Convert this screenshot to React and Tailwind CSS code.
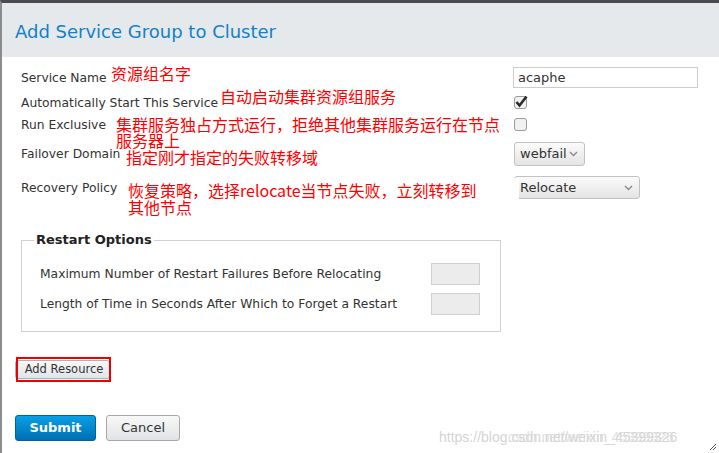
import React from 'react';

const ui = { fontFamily: '"DejaVu Sans", "Open Sans", sans-serif' };
const cjk = { fontFamily: '"Noto Sans CJK SC", "Liberation Sans", sans-serif' };

const Note = ({ children, className = '' }) => (
    <div className={`text-[16px] leading-[16px] text-[#ff0000] whitespace-nowrap ${className}`} style={cjk}>
        {children}
    </div>
);

const Chevron = () => (
    <svg width="9" height="6" viewBox="0 0 9 6" className="shrink-0">
        <path d="M1 1 L4.5 4.5 L8 1" fill="none" stroke="#8a8a8a" strokeWidth="1.4" />
    </svg>
);

const Select = ({ value, className = '' }) => (
    <div className={`flex items-center justify-between rounded-[3px] border border-[#c2c2c2] bg-gradient-to-b from-[#fbfbfb] to-[#e4e4e4] pl-[5px] pr-[6px] text-[13px] text-[#333] ${className}`}>
        <span>{value}</span>
        <Chevron />
    </div>
);

const Box = ({ checked }) => (
    <svg width="14" height="14" viewBox="0 0 14 14">
        <rect x="0.5" y="1.5" width="12" height="12" rx="2.5" fill="#f1f1f1" stroke="#9a9a9a" />
        {checked && <path d="M2.5 7 L5.5 10.5 L12.5 1.5" fill="none" stroke="#2b2b2b" strokeWidth="2.6" />}
    </svg>
);

export default function App() {
    return (
        <div className="relative w-[719px] h-[453px] overflow-hidden bg-white border-t-[3px] border-l-[2px] border-t-[#4b4b4b] border-l-[#8c8c8c]" style={ui}>
            {/* Header */}
            <div className="h-[54px] bg-[#e6e9ec] pl-[13px] flex items-center">
                <h1 className="text-[18px] text-[#1381c6] pt-[2px]">Add Service Group to Cluster</h1>
            </div>

            <div className="pl-[19px] pt-[9px] text-[12.3px] text-[#333]">
                {/* Service Name */}
                <div className="flex h-[26px]">
                    <div className="w-[90px] mt-[4px] leading-[16px] whitespace-nowrap">Service Name</div>
                    <Note className="w-[402px] -mt-[1px]">资源组名字</Note>
                    <div className="mt-[1px] w-[185px] h-[21px] border border-[#cccccc] pl-[4px] flex items-center text-[13px]">acaphe</div>
                </div>

                {/* Auto start */}
                <div className="flex h-[22px]">
                    <div className="w-[199px] mt-[3px] leading-[16px] whitespace-nowrap">Automatically Start This Service</div>
                    <Note className="w-[293px] -mt-[4px]">自动启动集群资源组服务</Note>
                    <div className="mt-[3px] ml-[1px]"><Box checked /></div>
                </div>

                {/* Run exclusive */}
                <div className="flex h-[28px]">
                    <div className="w-[95px] mt-[3px] leading-[16px] whitespace-nowrap">Run Exclusive</div>
                    <Note className="w-[397px] mt-[2px]">集群服务独占方式运行，拒绝其他集群服务运行在节点<br />服务器上</Note>
                    <div className="mt-[3px] ml-[1px]"><Box /></div>
                </div>

                {/* Failover domain */}
                <div className="flex h-[33px]">
                    <div className="w-[105px] mt-[4px] leading-[16px] whitespace-nowrap">Failover Domain</div>
                    <Note className="w-[387px] mt-[7px]">指定刚才指定的失败转移域</Note>
                    <Select value="webfail" className="ml-[1px] w-[71px] h-[24px]" />
                </div>

                {/* Recovery policy */}
                <div className="flex h-[48px]">
                    <div className="w-[107px] mt-[5px] leading-[16px] whitespace-nowrap">Recovery Policy</div>
                    <Note className="w-[385px] mt-[7px] leading-[17px]">恢复策略，选择relocate当节点失败，立刻转移到<br />其他节点</Note>
                    <div className="relative mt-[1px] ml-[1px]">
                        <Select value="Relocate" className="w-[126px] h-[23px]" />
                        <div className="absolute left-[-1px] top-[2px] w-[6px] h-[22px] bg-white" />
                    </div>
                </div>

                {/* Restart options */}
                <fieldset className="mt-[9px] w-[480px] border border-[#cdd1d5] pl-[12px] pr-[20px] pb-[16px]">
                    <legend className="px-[2px] text-[13px] leading-[16px] font-bold text-[#222]">Restart Options</legend>
                    <div className="mt-[15px] flex h-[22px] items-center justify-between pl-[6px]">
                        <span>Maximum Number of Restart Failures Before Relocating</span>
                        <div className="w-[49px] h-[22px] bg-[#ececec] border border-[#cfcfcf]" />
                    </div>
                    <div className="mt-[8px] flex h-[22px] items-center justify-between pl-[6px]">
                        <span>Length of Time in Seconds After Which to Forget a Restart</span>
                        <div className="w-[49px] h-[22px] bg-[#ececec] border border-[#cfcfcf]" />
                    </div>
                </fieldset>

                {/* Add resource */}
                <div className="relative mt-[28px] -ml-[6px] w-[96px] h-[19px]">
                    <button className="w-[95px] h-[19px] rounded-[3px] border border-[#b0b0b0] bg-gradient-to-b from-[#f7f7f7] to-[#e2e5e8] text-[11.5px] text-[#333] leading-[17px] pl-[3px]">
                        Add Resource
                    </button>
                    <div className="absolute left-[1px] top-[-3px] w-[95px] h-[25px] border-2 border-[#ee0000]" />
                </div>

                {/* Actions */}
                <div className="mt-[36px] -ml-[6px] flex gap-[10px]">
                    <button className="w-[81px] h-[26px] rounded-[3px] border border-[#00619c] bg-gradient-to-b from-[#0aa0e6] to-[#006fb2] text-[13px] font-bold text-white">
                        Submit
                    </button>
                    <button className="w-[74px] h-[26px] rounded-[3px] border border-[#a8a8a8] bg-gradient-to-b from-[#f8f8f8] to-[#e0e3e6] text-[13px] text-[#333]">
                        Cancel
                    </button>
                </div>
            </div>

            {/* Watermark */}
            <div className="absolute left-[437px] top-[424px] text-[14px] text-[#d4d4d4] whitespace-nowrap" style={{ fontFamily: '"Liberation Sans", sans-serif' }}>
                https://blog.csdn.net/weixin_45399326
            </div>
            <div className="absolute left-[506px] top-[424px] text-[14px] text-[#dadada] whitespace-nowrap opacity-80" style={{ fontFamily: '"Liberation Sans", sans-serif' }}>
                csdn.net/weixin_45399326
            </div>

            {/* Resize handle */}
            <svg className="absolute right-[2px] bottom-[2px]" width="8" height="8" viewBox="0 0 8 8">
                <path d="M1 7 L7 1 M4 7 L7 4" stroke="#555" strokeWidth="1" />
            </svg>
        </div>
    );
}
